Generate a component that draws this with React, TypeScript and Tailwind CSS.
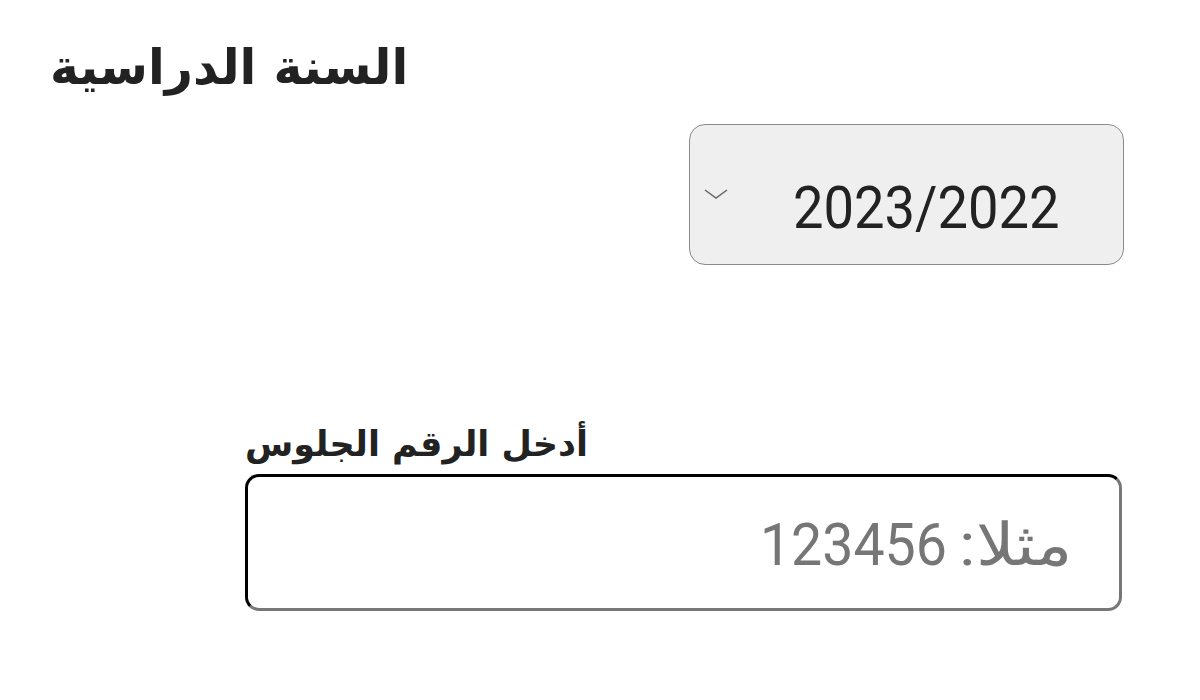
import React from "react";

export default function App() {
  return (
    <div className="w-[1200px] h-[700px] bg-white relative overflow-hidden" style={{ fontFamily: "Roboto, 'DejaVu Sans', sans-serif" }}>
      <div className="pt-[36px] pl-[50px]">
        <h1 className="text-[49px] font-bold text-[#222] leading-[64px] font-['DejaVu_Sans',sans-serif]" dir="rtl" style={{ textAlign: "left" }}>
          السنة الدراسية
        </h1>
      </div>
      <div className="flex justify-end pr-[76px] mt-[24px]">
        <div className="w-[435px] h-[141px] rounded-[16px] border border-[#8a8a8a] bg-[#efefef] relative">
          <svg className="absolute left-[13px] top-[62px]" width="26" height="14" viewBox="0 0 26 14" fill="none">
            <path d="M2 3 L13 11 L24 3" stroke="#666" strokeWidth="1.5" />
          </svg>
          <div className="absolute left-[103px] top-[53px] text-[60px] text-[#222] leading-[60px] font-['Roboto',sans-serif]">
            <span className="inline-block origin-left scale-x-[0.905]">2023/2022</span>
          </div>
        </div>
      </div>
      <div className="flex justify-end pr-[78px] mt-[156px]">
        <div className="w-[877px]">
          <div className="text-[35px] font-bold text-[#222] leading-[46px] font-['DejaVu_Sans',sans-serif] mb-[7px]" dir="rtl" style={{ textAlign: "left" }}>
            أدخل الرقم الجلوس
          </div>
          <div className="h-[137px] rounded-[14px] border-[3px] border-t-black border-l-black border-b-[#777] border-r-[#777] bg-white flex items-center justify-end pr-[46px] pt-[4px]">
            <span className="text-[59px] text-[#767676] leading-none font-['Roboto',sans-serif] inline-block origin-right scale-x-[0.94] whitespace-nowrap">
              123456
            </span>
            <span className="w-[27px]" />
            <span className="text-[59px] text-[#767676] leading-none font-['Roboto','Noto_Sans',sans-serif] inline-block origin-right scale-x-[1.15] whitespace-nowrap" dir="rtl">
              مثلا:
            </span>
          </div>
        </div>
      </div>
    </div>
  );
}
